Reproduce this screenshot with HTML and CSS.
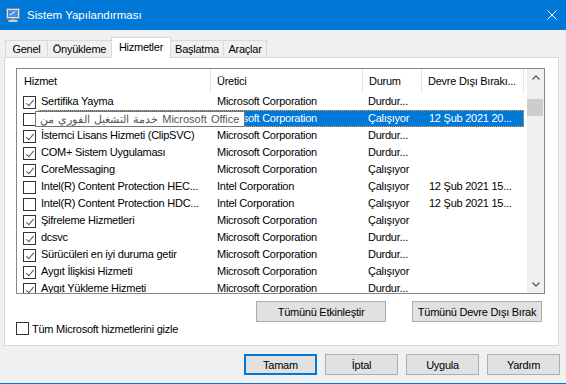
FILE: index.html
```html
<!DOCTYPE html>
<html lang="tr">
<head>
    <meta charset="UTF-8">
    <title>Sistem Yapılandırması</title>
    <link rel="stylesheet" href="styles.css">
</head>
<body>
    <div class="window">
        <div class="titlebar">
            <svg class="title-icon" viewBox="0 0 14 14">
                <rect x="0.5" y="0.5" width="13" height="10" fill="#dfe4ea" stroke="#7d8896"/>
                <rect x="2" y="2" width="10" height="7" fill="#4a90e2"/>
                <path d="M4 7 L9 3.5" stroke="#cfe6ff" stroke-width="1.2"/>
                <rect x="5" y="10.5" width="4" height="1.5" fill="#9aa3ad"/>
                <rect x="2.5" y="12" width="9" height="2" fill="#e6e6e6" stroke="#8c949c" stroke-width="0.6"/>
            </svg>
            <div class="title-text">Sistem Yapılandırması</div>
            <svg class="close" viewBox="0 0 10 10">
                <path d="M0.5 0.5 L9.5 9.5 M9.5 0.5 L0.5 9.5" stroke="#fff" stroke-width="1"/>
            </svg>
        </div>

        <div class="tabs">
            <div class="tab">Genel</div>
            <div class="tab">Önyükleme</div>
            <div class="tab active">Hizmetler</div>
            <div class="tab">Başlatma</div>
            <div class="tab">Araçlar</div>
        </div>

        <div class="pane">
            <div class="list">
                <div class="table">
                    <div class="header">
                        <div class="hcell first">Hizmet</div>
                        <div class="hcell">Üretici</div>
                        <div class="hcell">Durum</div>
                        <div class="hcell">Devre Dışı Bırakı...</div>
                    </div>

                    <div class="row">
                        <div class="boxcell"><span class="check on"></span></div>
                        <div class="line"><span>Sertifika Yayma</span><span>Microsoft Corporation</span><span>Durdur...</span><span></span></div>
                    </div>
                    <div class="row">
                        <div class="boxcell"><span class="check"></span></div>
                        <div class="line selected"><span>Microsoft Office</span><span>Microsoft Corporation</span><span>Çalışıyor</span><span>12 Şub 2021 20...</span></div>
                    </div>
                    <div class="row">
                        <div class="boxcell"><span class="check on"></span></div>
                        <div class="line"><span>İstemci Lisans Hizmeti (ClipSVC)</span><span>Microsoft Corporation</span><span>Durdur...</span><span></span></div>
                    </div>
                    <div class="row">
                        <div class="boxcell"><span class="check on"></span></div>
                        <div class="line"><span>COM+ Sistem Uygulaması</span><span>Microsoft Corporation</span><span>Durdur...</span><span></span></div>
                    </div>
                    <div class="row">
                        <div class="boxcell"><span class="check on"></span></div>
                        <div class="line"><span>CoreMessaging</span><span>Microsoft Corporation</span><span>Çalışıyor</span><span></span></div>
                    </div>
                    <div class="row">
                        <div class="boxcell"><span class="check"></span></div>
                        <div class="line"><span>Intel(R) Content Protection HEC...</span><span>Intel Corporation</span><span>Çalışıyor</span><span>12 Şub 2021 15...</span></div>
                    </div>
                    <div class="row">
                        <div class="boxcell"><span class="check"></span></div>
                        <div class="line"><span>Intel(R) Content Protection HDC...</span><span>Intel Corporation</span><span>Çalışıyor</span><span>12 Şub 2021 15...</span></div>
                    </div>
                    <div class="row">
                        <div class="boxcell"><span class="check on"></span></div>
                        <div class="line"><span>Şifreleme Hizmetleri</span><span>Microsoft Corporation</span><span>Çalışıyor</span><span></span></div>
                    </div>
                    <div class="row">
                        <div class="boxcell"><span class="check on"></span></div>
                        <div class="line"><span>dcsvc</span><span>Microsoft Corporation</span><span>Durdur...</span><span></span></div>
                    </div>
                    <div class="row">
                        <div class="boxcell"><span class="check on"></span></div>
                        <div class="line"><span>Sürücüleri en iyi duruma getir</span><span>Microsoft Corporation</span><span>Durdur...</span><span></span></div>
                    </div>
                    <div class="row">
                        <div class="boxcell"><span class="check on"></span></div>
                        <div class="line"><span>Aygıt İlişkisi Hizmeti</span><span>Microsoft Corporation</span><span>Çalışıyor</span><span></span></div>
                    </div>
                    <div class="row">
                        <div class="boxcell"><span class="check on"></span></div>
                        <div class="line"><span>Aygıt Yükleme Hizmeti</span><span>Microsoft Corporation</span><span>Durdur...</span><span></span></div>
                    </div>
                </div>
                <div class="scrollbar">
                    <div class="arrow">
                        <svg viewBox="0 0 8 5" width="8" height="5"><path d="M0.5 4.5 L4 1 L7.5 4.5" fill="none" stroke="#606060" stroke-width="1.4"/></svg>
                    </div>
                    <div class="track"><div class="thumb"></div></div>
                    <div class="arrow">
                        <svg viewBox="0 0 8 5" width="8" height="5"><path d="M0.5 0.5 L4 4 L7.5 0.5" fill="none" stroke="#606060" stroke-width="1.4"/></svg>
                    </div>
                </div>
            </div>

            <div class="pane-buttons">
                <button class="btn wide">Tümünü Etkinleştir</button>
                <button class="btn wide">Tümünü Devre Dışı Bırak</button>
            </div>

            <label class="hide-ms">
                <span class="check"></span>
                <span>Tüm Microsoft hizmetlerini gizle</span>
            </label>
        </div>

        <div class="dialog-buttons">
            <button class="btn default">Tamam</button>
            <button class="btn">İptal</button>
            <button class="btn">Uygula</button>
            <button class="btn">Yardım</button>
        </div>

        <div class="tooltip">خدمة التشغيل الفوري من Microsoft Office</div>
    </div>
</body>
</html>
```

FILE: styles.css
```css
body {
    margin: 0;
    width: 566px;
    height: 384px;
    overflow: hidden;
    background: #f0f0f0;
    font-family: "Liberation Sans", Arial, sans-serif;
    font-size: 11px;
    letter-spacing: -0.25px;
    color: #000;
}
.window {
    position: relative;
    height: 383px;
    border-bottom: 1px solid #0078d7;
}
.titlebar {
    height: 30px;
    background: #0078d7;
    color: #fff;
    display: flex;
    align-items: center;
}
.title-icon {
    width: 14px;
    height: 14px;
    margin: 0 7px 0 6px;
}
.title-text {
    flex: 1;
    font-size: 11.5px;
    letter-spacing: 0;
}
.close {
    width: 10px;
    height: 10px;
    margin-right: 9px;
}
.tabs {
    display: flex;
    align-items: flex-end;
    height: 20px;
    margin-top: 7px;
    padding-left: 5px;
    position: relative;
    z-index: 1;
}
.tab {
    height: 16px;
    line-height: 17px;
    text-align: center;
    box-sizing: content-box;
    border: 1px solid #d9d9d9;
    border-bottom: none;
    margin-right: -1px;
}
.tab:nth-child(1) { width: 41px; }
.tab:nth-child(2) { width: 63px; }
.tab:nth-child(3) { width: 58px; }
.tab:nth-child(4) { width: 52px; }
.tab:nth-child(5) { width: 42px; }
.tab.active {
    height: 20px;
    line-height: 18px;
    background: #fff;
    margin-bottom: -1px;
}
.pane {
    margin: 0 7px 0 4px;
    height: 277px;
    background: #fff;
    border: 1px solid #d9d9d9;
    padding: 10px 13px 0 11px;
}
.list {
    display: flex;
    height: 224px;
    border: 1px solid #828790;
    overflow: hidden;
}
.table {
    flex: 1;
    overflow: hidden;
}
.header {
    display: grid;
    grid-template-columns: 194px 152px 59px 102px;
    height: 24px;
    line-height: 24px;
}
.hcell {
    padding-left: 6px;
    border-right: 1px solid #e5e5e5;
    white-space: nowrap;
    overflow: hidden;
}
.hcell.first {
    padding-left: 7px;
}
.row {
    display: flex;
    height: 17px;
    line-height: 17px;
}
.boxcell {
    width: 21px;
    padding: 3px 0 0 6px;
    box-sizing: border-box;
}
.line {
    display: grid;
    grid-template-columns: 173px 152px 59px 102px;
    white-space: nowrap;
}
.line span {
    overflow: hidden;
    padding-left: 6px;
}
.line span:first-child {
    padding-left: 3px;
}
.line span:nth-child(3) {
    padding-left: 5px;
}
.line span:nth-child(4) {
    padding-left: 7px;
}
.line.selected {
    background: #0078d7;
    color: #fff;
    outline: 1px dotted #ff9a2e;
    outline-offset: -1px;
}
.check {
    display: inline-block;
    position: relative;
    width: 13px;
    height: 13px;
    box-sizing: border-box;
    border: 1px solid #333;
    background: #fff;
}
.check.on::after {
    content: "";
    position: absolute;
    left: 3.5px;
    top: 0.5px;
    width: 3px;
    height: 7px;
    border: solid #555;
    border-width: 0 1px 1px 0;
    transform: rotate(40deg);
}
.scrollbar {
    width: 17px;
    background: #f0f0f0;
    display: flex;
    flex-direction: column;
}
.arrow {
    height: 17px;
    display: flex;
    align-items: center;
    justify-content: center;
}
.track {
    flex: 1;
    padding: 13px 1px 0 0;
}
.thumb {
    height: 17px;
    background: #cdcdcd;
}
.pane-buttons {
    display: flex;
    justify-content: flex-end;
    gap: 26px;
    margin: 7px 3px 0 0;
}
.btn {
    font-family: inherit;
    font-size: 11px;
    letter-spacing: -0.25px;
    color: #000;
    height: 21px;
    width: 73px;
    padding: 0;
    background: #e1e1e1;
    border: 1px solid #adadad;
}
.btn.wide {
    width: 130px;
}
.btn.default {
    border: 2px solid #0078d7;
}
.hide-ms {
    display: flex;
    align-items: center;
    gap: 3px;
    height: 13px;
}
.dialog-buttons {
    display: flex;
    justify-content: flex-end;
    gap: 8px;
    margin: 8px 6px 0 0;
}
.tooltip {
    position: absolute;
    left: 35px;
    top: 111px;
    width: 210px;
    height: 16px;
    box-sizing: border-box;
    padding-left: 4px;
    line-height: 14px;
    letter-spacing: 0;
    word-spacing: 1px;
    background: #fff;
    border: 1px solid #767676;
    color: #575757;
    white-space: nowrap;
    overflow: hidden;
}
```
